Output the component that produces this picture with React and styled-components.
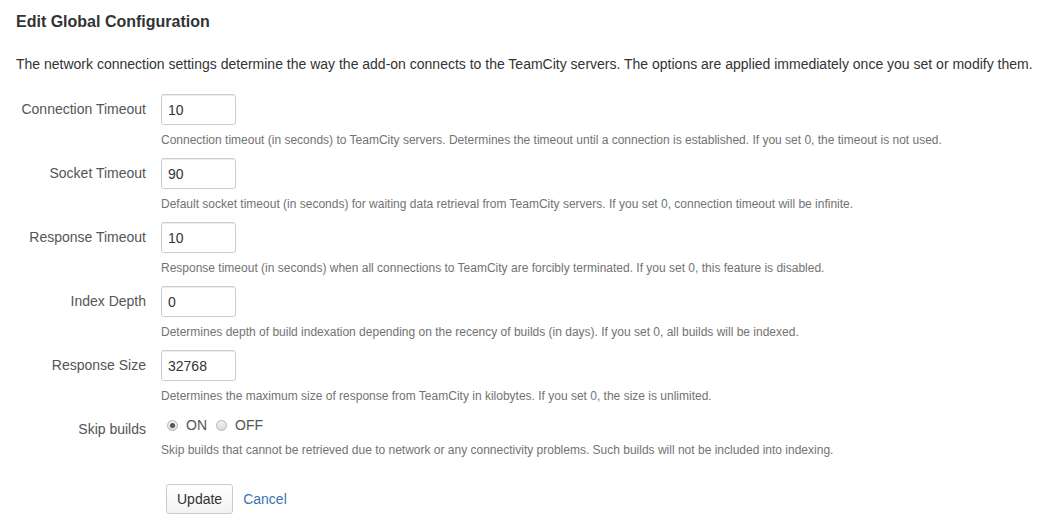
import React from "react";
import styled, { createGlobalStyle } from "styled-components";

const GlobalStyle = createGlobalStyle`
  html, body {
    margin: 0;
    padding: 0;
    background: #fff;
  }
  body {
    font-family: "Liberation Sans", Arial, Helvetica, sans-serif;
    font-size: 14px;
    color: #333;
  }
`;

const fields = [
  {
    label: "Connection Timeout",
    value: "10",
    help: "Connection timeout (in seconds) to TeamCity servers. Determines the timeout until a connection is established. If you set 0, the timeout is not used.",
  },
  {
    label: "Socket Timeout",
    value: "90",
    help: "Default socket timeout (in seconds) for waiting data retrieval from TeamCity servers. If you set 0, connection timeout will be infinite.",
  },
  {
    label: "Response Timeout",
    value: "10",
    help: "Response timeout (in seconds) when all connections to TeamCity are forcibly terminated. If you set 0, this feature is disabled.",
  },
  {
    label: "Index Depth",
    value: "0",
    help: "Determines depth of build indexation depending on the recency of builds (in days). If you set 0, all builds will be indexed.",
  },
  {
    label: "Response Size",
    value: "32768",
    help: "Determines the maximum size of response from TeamCity in kilobytes. If you set 0, the size is unlimited.",
  },
];

const App = () => {
  return (
    <Page>
      <GlobalStyle />
      <Title>Edit Global Configuration</Title>
      <Intro>
        The network connection settings determine the way the add-on connects to the TeamCity servers. The options are applied immediately once you set or modify them.
      </Intro>
      <Form>
        {fields.map((f) => (
          <Row key={f.label}>
            <Label>{f.label}</Label>
            <Field>
              <TextInput type="text" defaultValue={f.value} />
              <Help>{f.help}</Help>
            </Field>
          </Row>
        ))}
        <Row>
          <Label>Skip builds</Label>
          <Field>
            <Radios>
              <RadioOption>
                <RadioDot checked />
                ON
              </RadioOption>
              <RadioOption>
                <RadioDot />
                OFF
              </RadioOption>
            </Radios>
            <Help $tight>
              Skip builds that cannot be retrieved due to network or any connectivity problems. Such builds will not be included into indexing.
            </Help>
          </Field>
        </Row>
        <Actions>
          <Button type="button">Update</Button>
          <CancelLink href="#">Cancel</CancelLink>
        </Actions>
      </Form>
    </Page>
  );
};

const Page = styled.div`
  padding: 12px 16px 0 16px;
`;

const Title = styled.h2`
  margin: 0;
  font-size: 16px;
  line-height: 20px;
  font-weight: bold;
  color: #333;
`;

const Intro = styled.p`
  margin: 22px 0 20px 0;
  line-height: 20px;
  color: #333;
  white-space: nowrap;
`;

const Form = styled.form`
  display: flex;
  flex-direction: column;
`;

const Row = styled.div`
  display: grid;
  grid-template-columns: 130px 1fr;
  column-gap: 15px;
`;

const Label = styled.label`
  text-align: right;
  padding-top: 5px;
  line-height: 20px;
  color: #555;
  white-space: nowrap;
`;

const Field = styled.div`
  display: flex;
  flex-direction: column;
  align-items: flex-start;
`;

const TextInput = styled.input`
  box-sizing: border-box;
  width: 75px;
  height: 31px;
  padding: 4px 6px;
  font-family: inherit;
  font-size: 14px;
  color: #333;
  border: 1px solid #ccc;
  border-radius: 3px;
  box-shadow: inset 0 1px 1px rgba(0, 0, 0, 0.075);
  outline: none;
`;

const Help = styled.div`
  margin: ${(p) => (p.$tight ? "5px 0 25px 0" : "6px 0 9px 0")};
  font-size: 12px;
  line-height: 18px;
  color: #737373;
  white-space: nowrap;
`;

const Radios = styled.div`
  display: flex;
  align-items: center;
  gap: 9px;
  height: 22px;
  padding-left: 6px;
  margin-top: 0;
`;

const RadioOption = styled.span`
  display: inline-flex;
  align-items: center;
  gap: 8px;
  color: #555;
  line-height: 20px;
`;

const RadioDot = styled.span`
  box-sizing: border-box;
  width: 11px;
  height: 11px;
  border-radius: 50%;
  border: 1px solid #b4b4b4;
  background: linear-gradient(#f1f1f1, #dcdcdc);
  display: inline-flex;
  align-items: center;
  justify-content: center;

  &::after {
    content: "";
    width: 5px;
    height: 5px;
    border-radius: 50%;
    background: ${(p) => (p.checked ? "#555" : "transparent")};
  }
`;

const Actions = styled.div`
  display: flex;
  align-items: center;
  gap: 10px;
  padding-left: 150px;
`;

const Button = styled.button`
  box-sizing: border-box;
  height: 30px;
  padding: 0 10px;
  font-family: inherit;
  font-size: 14px;
  color: #333;
  background: linear-gradient(#fff, #f2f2f2);
  border: 1px solid #ccc;
  border-radius: 3px;
  cursor: pointer;
`;

const CancelLink = styled.a`
  color: #3b73af;
  text-decoration: none;
  font-size: 14px;
`;

export default App;
